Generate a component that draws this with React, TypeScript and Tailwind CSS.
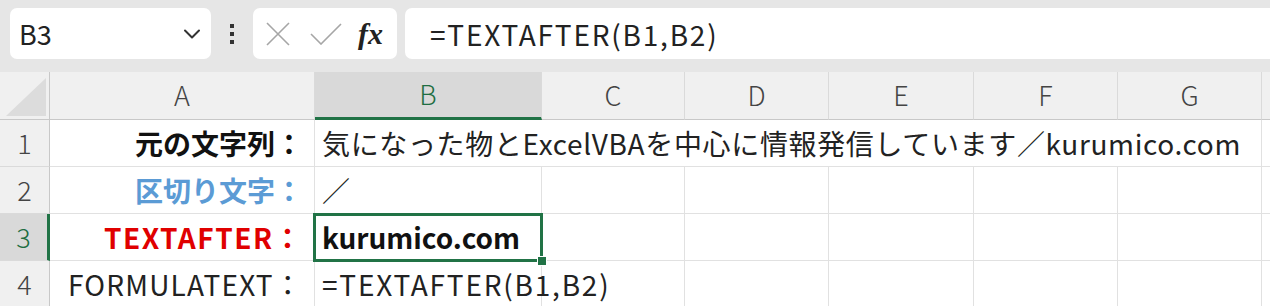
import React from "react";

const FONT = { fontFamily: '"Noto Sans CJK JP", "Noto Sans", sans-serif' };

const colWidths = [50, 265, 227, 143, 144, 145, 144, 144, 8];
const cols = ["A", "B", "C", "D", "E", "F", "G"];

function Chevron() {
  return (
    <svg width="18" height="12" viewBox="0 0 18 12" fill="none">
      <path d="M2 2.5 L9 9.5 L16 2.5" stroke="#333" strokeWidth="2" strokeLinecap="round" strokeLinejoin="round" />
    </svg>
  );
}

function Cell({
  children,
  className = "",
  noRight = false,
}: {
  children?: React.ReactNode;
  className?: string;
  noRight?: boolean;
}) {
  return (
    <div
      className={
        "relative flex items-center border-b border-[#e1e1e1] " +
        (noRight ? "" : "border-r ") +
        className
      }
    >
      {children}
    </div>
  );
}

function RowHeader({ n, selected = false }: { n: number; selected?: boolean }) {
  return (
    <div
      className={
        "flex items-center justify-center text-[27px] font-light border-b border-[#dadada] " +
        (selected
          ? "bg-[#d9d9d9] text-[#1e6e42] border-r-[3px] border-r-[#217346]"
          : "bg-[#f0f0f0] text-[#444] border-r border-r-[#c8c8c8]")
      }
    >
      {n}
    </div>
  );
}

export default function App() {
  return (
    <div className="w-[1270px] h-[306px] overflow-hidden bg-[#e6e6e6]" style={FONT}>
      {/* Formula bar */}
      <div className="flex items-center h-[72px] pl-[10px] pb-[5px]">
        <div className="flex items-center justify-between w-[201px] h-[51px] bg-white rounded-[7px] pl-[9px] pr-[10px]">
          <span className="text-[27px] text-[#222] leading-none">B3</span>
          <Chevron />
        </div>
        <div className="w-[42px] flex justify-center">
          <svg width="6" height="22" viewBox="0 0 6 22">
            <rect x="1" y="1" width="4" height="4" fill="#333" />
            <rect x="1" y="9" width="4" height="4" fill="#333" />
            <rect x="1" y="17" width="4" height="4" fill="#333" />
          </svg>
        </div>
        <div className="flex items-center w-[144px] h-[51px] bg-white rounded-[7px]">
          <svg className="ml-[13px]" width="24" height="24" viewBox="0 0 24 24">
            <path d="M1 1 L23 23 M23 1 L1 23" stroke="#a6a6a6" strokeWidth="1.6" />
          </svg>
          <svg className="ml-[20px]" width="32" height="22" viewBox="0 0 32 22">
            <path d="M1 11 L11 21 L31 1" stroke="#a6a6a6" strokeWidth="1.6" fill="none" />
          </svg>
          <span
            className="ml-[16px] text-[30px] italic font-bold text-[#222] leading-none"
            style={{ fontFamily: '"Liberation Serif", "DejaVu Serif", serif' }}
          >
            fx
          </span>
        </div>
        <div className="flex items-center flex-1 h-[51px] ml-[8px] bg-white rounded-l-[7px] pl-[25px]">
          <span className="text-[28px] tracking-[1.8px] text-[#222] leading-none">=TEXTAFTER(B1,B2)</span>
        </div>
      </div>

      {/* Grid */}
      <div
        className="grid bg-white"
        style={{
          gridTemplateColumns: colWidths.map((w) => w + "px").join(" "),
          gridTemplateRows: "48px 47px 47px 47px 47px",
        }}
      >
        {/* Header row */}
        <div className="relative bg-[#f0f0f0] border-r border-b border-[#c8c8c8]">
          <svg className="absolute right-[3px] bottom-[3px]" width="40" height="38" viewBox="0 0 40 38">
            <path d="M40 0 L40 38 L0 38 Z" fill="#dcdcdc" />
          </svg>
        </div>
        {cols.map((c) => (
          <div
            key={c}
            className={
              "flex items-center justify-center text-[27px] font-light border-r border-[#dadada] " +
              (c === "B"
                ? "bg-[#d9d9d9] text-[#1e6e42] border-b-[3px] border-b-[#217346]"
                : "bg-[#f0f0f0] text-[#444] border-b border-b-[#c8c8c8]")
            }
          >
            {c}
          </div>
        ))}
        <div className="bg-[#f0f0f0] border-b border-[#c8c8c8]" />

        {/* Row 1 */}
        <RowHeader n={1} />
        <Cell className="justify-end pr-[11px]">
          <span className="text-[28px] font-bold text-[#111] whitespace-nowrap">元の文字列：</span>
        </Cell>
        <Cell noRight>
          <span className="absolute left-[7px] text-[28px] tracking-[0.65px] text-[#222] whitespace-nowrap">
            気になった物とExcelVBAを中心に情報発信しています／kurumico.com
          </span>
        </Cell>
        <Cell noRight />
        <Cell noRight />
        <Cell noRight />
        <Cell noRight />
        <Cell />
        <Cell noRight />

        {/* Row 2 */}
        <RowHeader n={2} />
        <Cell className="justify-end pr-[11px]">
          <span className="text-[28px] font-bold text-[#5b9bd5] whitespace-nowrap">区切り文字：</span>
        </Cell>
        <Cell className="pl-[7px]">
          <span className="text-[28px] text-[#222]">／</span>
        </Cell>
        <Cell />
        <Cell />
        <Cell />
        <Cell />
        <Cell />
        <Cell noRight />

        {/* Row 3 */}
        <RowHeader n={3} selected />
        <Cell className="justify-end pr-[11px]">
          <span className="text-[28px] tracking-[1.5px] font-bold text-[#e00000] whitespace-nowrap">TEXTAFTER：</span>
        </Cell>
        <Cell className="pl-[7px] z-10">
          <div className="absolute left-[-2px] top-[-1px] right-[-2px] bottom-[-2px] border-[3px] border-[#217346] pointer-events-none" />
          <div className="absolute right-[-6px] bottom-[-6px] w-[8px] h-[8px] bg-[#217346] border border-white box-content" />
          <span className="text-[28px] font-bold text-[#111]">kurumico.com</span>
        </Cell>
        <Cell />
        <Cell />
        <Cell />
        <Cell />
        <Cell />
        <Cell noRight />

        {/* Row 4 */}
        <RowHeader n={4} />
        <Cell className="justify-end pr-[11px]">
          <span className="text-[28px] tracking-[1.2px] text-[#222] whitespace-nowrap">FORMULATEXT：</span>
        </Cell>
        <Cell className="pl-[7px]">
          <span className="text-[28px] tracking-[1.8px] text-[#222] whitespace-nowrap">=TEXTAFTER(B1,B2)</span>
        </Cell>
        <Cell />
        <Cell />
        <Cell />
        <Cell />
        <Cell />
        <Cell noRight />
      </div>
    </div>
  );
}
